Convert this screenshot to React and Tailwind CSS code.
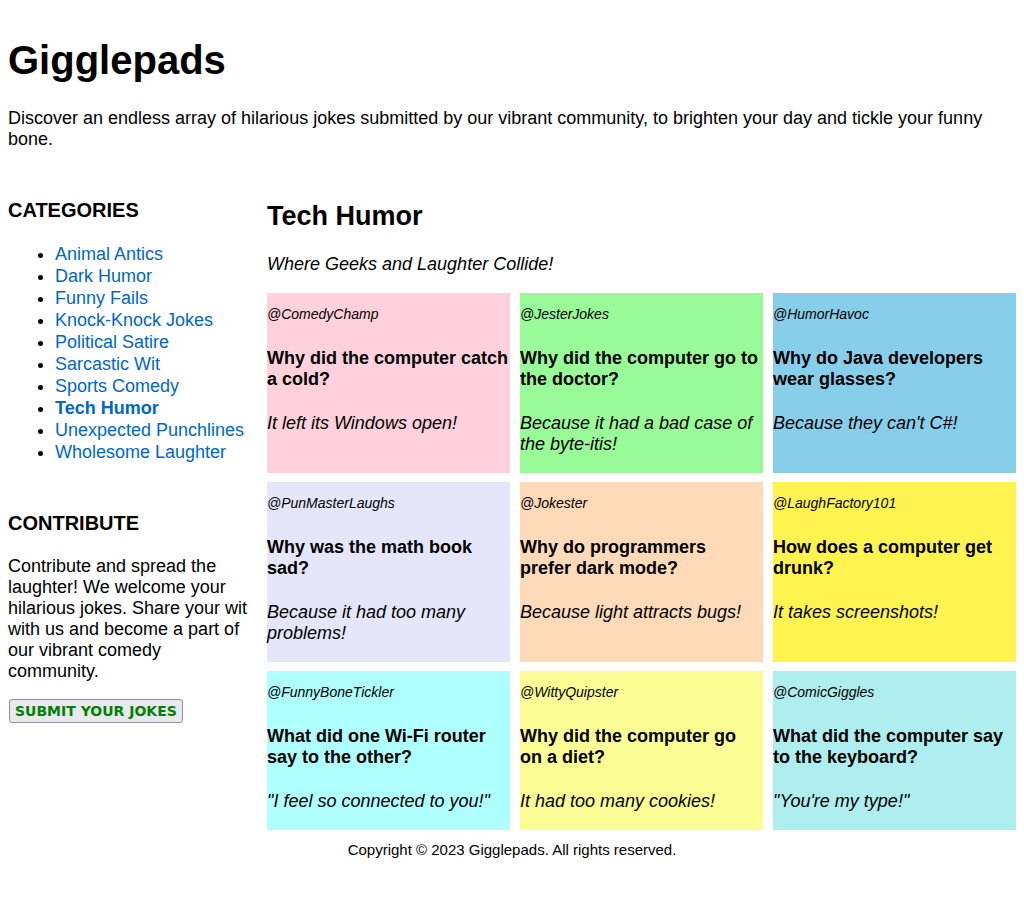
import React from 'react';

const categories = [
  'Animal Antics',
  'Dark Humor',
  'Funny Fails',
  'Knock-Knock Jokes',
  'Political Satire',
  'Sarcastic Wit',
  'Sports Comedy',
  'Tech Humor',
  'Unexpected Punchlines',
  'Wholesome Laughter',
];

const jokes = [
  { user: '@ComedyChamp', q: 'Why did the computer catch a cold?', a: 'It left its Windows open!', bg: 'bg-[#ffd1dc]' },
  { user: '@JesterJokes', q: 'Why did the computer go to the doctor?', a: 'Because it had a bad case of the byte-itis!', bg: 'bg-[#98fb98]' },
  { user: '@HumorHavoc', q: 'Why do Java developers wear glasses?', a: "Because they can't C#!", bg: 'bg-[#87ceeb]' },
  { user: '@PunMasterLaughs', q: 'Why was the math book sad?', a: 'Because it had too many problems!', bg: 'bg-[#e6e6fa]' },
  { user: '@Jokester', q: 'Why do programmers prefer dark mode?', a: 'Because light attracts bugs!', bg: 'bg-[#ffdab9]' },
  { user: '@LaughFactory101', q: 'How does a computer get drunk?', a: 'It takes screenshots!', bg: 'bg-[#fff44f]' },
  { user: '@FunnyBoneTickler', q: 'What did one Wi-Fi router say to the other?', a: '"I feel so connected to you!"', bg: 'bg-[#b0ffff]' },
  { user: '@WittyQuipster', q: 'Why did the computer go on a diet?', a: 'It had too many cookies!', bg: 'bg-[#fdfd96]' },
  { user: '@ComicGiggles', q: 'What did the computer say to the keyboard?', a: '"You\'re my type!"', bg: 'bg-[#afeeee]' },
];

const JokeCard = ({ joke }) => (
  <div className={`${joke.bg} pt-[13px] pb-[18px] pr-[1.5px]`}>
    <p className="text-[14px] leading-[16px] italic">{joke.user}</p>
    <h3 className="mt-[26px] text-[18px] leading-[21px] font-bold">{joke.q}</h3>
    <p className="mt-[23px] text-[18px] leading-[21px] italic">{joke.a}</p>
  </div>
);

const App = () => {
  return (
    <div className="min-h-screen bg-white px-2 pt-[37px] pb-8 text-black font-['Liberation_Sans',Arial,sans-serif]">
      <h1 className="text-[40px] leading-[46px] font-bold">Gigglepads</h1>
      <p className="mt-[25px] text-[18px] leading-[21px]">
        Discover an endless array of hilarious jokes submitted by our vibrant community, to brighten your day and tickle your funny bone.
      </p>

      <div className="mt-[49px] flex gap-[14px]">
        {/* sidebar */}
        <aside className="w-[245px] shrink-0">
          <h3 className="text-[20px] leading-[23px] font-bold">CATEGORIES</h3>
          <ul className="mt-[21px] list-disc pl-[47px] text-[18px] leading-[22px]">
            {categories.map((c) => (
              <li key={c}>
                <a href="#" className={`text-[#0066cc] ${c === 'Tech Humor' ? 'font-bold' : ''}`}>
                  {c}
                </a>
              </li>
            ))}
          </ul>

          <h3 className="mt-[49px] text-[20px] leading-[23px] font-bold">CONTRIBUTE</h3>
          <p className="mt-[21px] text-[18px] leading-[21px]">
            Contribute and spread the laughter! We welcome your hilarious jokes. Share your wit with us and become a part of our vibrant comedy community.
          </p>
          <button className="mt-[17px] ml-px h-[24px] px-[5px] flex items-center rounded-[3px] border border-[#8f8f9d] bg-[#e9e9ed] text-[#008000] font-bold text-[14px] leading-[16px] font-['DejaVu_Sans',Verdana,sans-serif]">
            SUBMIT YOUR JOKES
          </button>
        </aside>

        {/* main */}
        <main className="flex-1">
          <h2 className="mt-[2px] text-[27px] leading-[31px] font-bold">Tech Humor</h2>
          <p className="mt-[22px] text-[18px] leading-[21px] italic">Where Geeks and Laughter Collide!</p>
          <div className="mt-[18px] grid grid-cols-3 gap-x-[10px] gap-y-[9px]">
            {jokes.map((j) => (
              <JokeCard key={j.user} joke={j} />
            ))}
          </div>
        </main>
      </div>

      <footer className="mt-[11px] text-center text-[15px] leading-[17px]">
        Copyright © 2023 Gigglepads. All rights reserved.
      </footer>
    </div>
  );
};

export default App;
